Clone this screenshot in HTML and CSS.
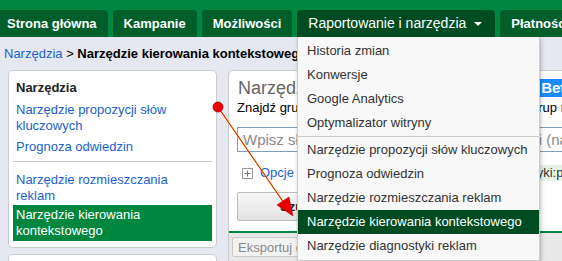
FILE: index.html
```html
<!DOCTYPE html>
<html lang="pl">
<head>
  <meta charset="UTF-8">
  <title>Narzędzie kierowania kontekstowego</title>
  <link rel="stylesheet" href="styles.css">
</head>
<body>
  <div class="topnav">
    <a class="tab tab-first" href="#">Strona główna</a>
    <a class="tab" href="#">Kampanie</a>
    <a class="tab" href="#">Możliwości</a>
    <a class="tab tab-active" href="#">Raportowanie i narzędzia<span class="caret"></span></a>
    <a class="tab" href="#">Płatności</a>
  </div>

  <div class="crumbs"><a href="#">Narzędzia</a> &gt; <b>Narzędzie kierowania kontekstowego</b></div>

  <div class="main">
    <aside class="side">
      <div class="panel">
        <h3>Narzędzia</h3>
        <ul class="tool-list">
          <li><a href="#">Narzędzie propozycji słów kluczowych</a></li>
          <li><a href="#">Prognoza odwiedzin</a></li>
        </ul>
        <hr>
        <ul class="tool-list">
          <li><a href="#">Narzędzie rozmieszczania reklam</a></li>
          <li class="current">Narzędzie kierowania kontekstowego</li>
        </ul>
      </div>
      <div class="panel panel-next"></div>
    </aside>

    <section class="content">
      <div class="content-body">
        <div class="title-row">
          <h2>Narzędzie kierowania kontekstowego</h2>
          <span class="beta">Beta</span>
        </div>
        <p class="lead">Znajdź grupy słów kluczowych i utwórz z nich kilka grup reklam</p>
        <input class="search" type="text" placeholder="Wpisz słowa kluczowe, tematy, albo kategorii (na przykład: buty)">
        <div class="opts">
          <svg class="plus" width="11" height="11" viewBox="0 0 11 11">
            <rect x="0.5" y="0.5" width="10" height="10" fill="#fff" stroke="#9a9a9a"/>
            <path d="M2.5 5.5h6M5.5 2.5v6" stroke="#777" stroke-width="1"/>
          </svg>
          <a class="opts-link" href="#">Opcje zaawansowane i filtry</a>
          <span class="stats">Statystyki:pokaż</span>
        </div>
        <button class="btn-search" type="button">Szukaj</button>
      </div>
      <div class="content-bar">
        <button class="btn-export" type="button" disabled>Eksportuj do pliku</button>
      </div>
    </section>
  </div>

  <ul class="menu">
    <li>Historia zmian</li>
    <li>Konwersje</li>
    <li>Google Analytics</li>
    <li>Optymalizator witryny</li>
    <li class="sep"></li>
    <li>Narzędzie propozycji słów kluczowych</li>
    <li>Prognoza odwiedzin</li>
    <li>Narzędzie rozmieszczania reklam</li>
    <li class="active">Narzędzie kierowania kontekstowego</li>
    <li>Narzędzie diagnostyki reklam</li>
  </ul>

  <!-- red pointer drawn over the page -->
  <svg class="pointer" width="562" height="261" viewBox="0 0 562 261">
    <line x1="218" y1="107" x2="284" y2="203" stroke="#ffcc33" stroke-width="2" opacity="0.6"/>
    <line x1="218" y1="107" x2="284" y2="203" stroke="#e10000" stroke-width="1"/>
    <polygon points="293,216 277,205 289,197" fill="#e80000" stroke="#b00000" stroke-width="0.6"/>
    <circle cx="218" cy="107" r="5" fill="#ee0000" stroke="#a00000" stroke-width="0.8"/>
  </svg>
</body>
</html>
```

FILE: styles.css
```css
html, body {
  margin: 0;
  overflow: hidden;
}

body {
  position: relative;
  height: 261px;
  background-color: #e5e8f0;
  color: #000;
  font-family: "Liberation Sans", Arial, sans-serif;
  font-size: 13px;
}

a {
  color: #1a62d1;
  text-decoration: none;
}

/* top tabs */
.topnav {
  display: flex;
  gap: 5px;
  padding-top: 10px;
  background-color: #00873f;
  white-space: nowrap;
}

.tab {
  flex: none;
  height: 27px;
  line-height: 27px;
  padding: 0 11px;
  background-color: #005e2b;
  color: #fff;
  font-weight: bold;
  border-radius: 4px 4px 0 0;
}

.tab-first {
  margin-left: -4px;
}

.tab-active {
  background-color: #004c22;
  font-weight: normal;
  font-size: 14px;
  padding: 0 13px 0 11px;
}

.caret {
  display: inline-block;
  margin-left: 8px;
  border-left: 4px solid transparent;
  border-right: 4px solid transparent;
  border-top: 4px solid #fff;
  vertical-align: middle;
}

/* breadcrumb */
.crumbs {
  padding: 8px 4px;
  line-height: 17px;
  white-space: nowrap;
}

/* layout */
.main {
  display: flex;
  align-items: flex-start;
  gap: 11px;
  padding-left: 8px;
}

.side {
  flex: none;
  width: 209px;
  display: flex;
  flex-direction: column;
  gap: 6px;
}

.panel {
  background-color: #fff;
  border: 1px solid #ccc;
  border-radius: 5px;
  padding: 8px 4px 6px;
}

.panel h3 {
  margin: 0 0 6px;
  padding-left: 3px;
  font-size: 13px;
  line-height: 17px;
  color: #222;
}

.tool-list {
  list-style: none;
  margin: 0;
  padding: 0;
}

.tool-list li {
  padding: 0 10px 0 3px;
  line-height: 16px;
}

.tool-list li + li {
  margin-top: 5px;
}

.tool-list li + li.current {
  margin-top: 1px;
}

.tool-list .current {
  padding-top: 2px;
  padding-bottom: 2px;
  background-color: #00873f;
  color: #fff;
}

.panel hr {
  border: 0;
  border-top: 1px solid #ccc;
  margin: 6px 0 10px;
}

.panel-next {
  height: 30px;
}

/* main content */
.content {
  flex: none;
  width: 420px;
  background-color: #fff;
  border: 1px solid #ccc;
  border-radius: 5px 0 0 0;
}

.content-body {
  padding: 6px 8px 10px;
  border-bottom: 2px solid #00873f;
}

.title-row {
  display: flex;
  align-items: center;
  gap: 3px;
}

.title-row h2 {
  margin: 0 0 0 1px;
  font-size: 18px;
  line-height: 22px;
  font-weight: normal;
  color: #666;
  white-space: nowrap;
}

.beta {
  padding: 0 3px;
  background-color: #1a8cff;
  color: #fff;
  font-size: 15px;
  font-weight: bold;
  line-height: 18px;
}

.lead {
  margin: 1px 0 0;
  line-height: 16px;
  white-space: nowrap;
}

.search {
  display: block;
  box-sizing: border-box;
  width: 400px;
  height: 25px;
  margin-top: 11px;
  padding: 0 5px;
  border: 1px solid #7f9db9;
  font: 15px "Liberation Sans", Arial, sans-serif;
}

.search::placeholder {
  color: #8a8a8a;
}

.opts {
  display: flex;
  align-items: center;
  margin-top: 13px;
  line-height: 16px;
  white-space: nowrap;
}

.plus {
  flex: none;
  margin: 0 7px 0 5px;
}

.opts-link {
  width: 233px;
}

.stats {
  padding: 0 4px;
  background-color: #e6f2e6;
  color: #333;
}

.btn-search {
  display: block;
  height: 29px;
  margin-top: 11px;
  padding: 0 42px;
  border: 1px solid #bbb;
  border-radius: 2px;
  background: linear-gradient(#f8f8f8, #e2e2e2);
  color: #222;
  font: bold 13px "Liberation Sans", Arial, sans-serif;
}

.content-bar {
  height: 40px;
  padding: 4px 3px;
  background-color: #e8e8e8;
}

.btn-export {
  height: 20px;
  padding: 0 5px;
  border: 1px solid #c8c8c8;
  border-radius: 2px;
  background-color: #f2f2f2;
  color: #8a8a8a;
  font: 13px "Liberation Sans", Arial, sans-serif;
}

/* dropdown of the active tab */
.menu {
  position: absolute;
  top: 37px;
  left: 297px;
  width: 241px;
  margin: 0;
  padding: 2px 0;
  list-style: none;
  background-color: #f8f8f8;
  border: 1px solid #ccc;
  border-top: 0;
  box-shadow: 1px 2px 4px rgba(0, 0, 0, 0.25);
}

.menu li {
  height: 24px;
  line-height: 24px;
  padding: 0 9px;
  color: #333;
  white-space: nowrap;
}

.menu .sep {
  height: 0;
  margin: 1px 0;
  border-top: 1px solid #ccc;
}

.menu .active {
  background-color: #004c22;
  color: #fff;
}

.pointer {
  position: absolute;
  top: 0;
  left: 0;
  pointer-events: none;
}
```
